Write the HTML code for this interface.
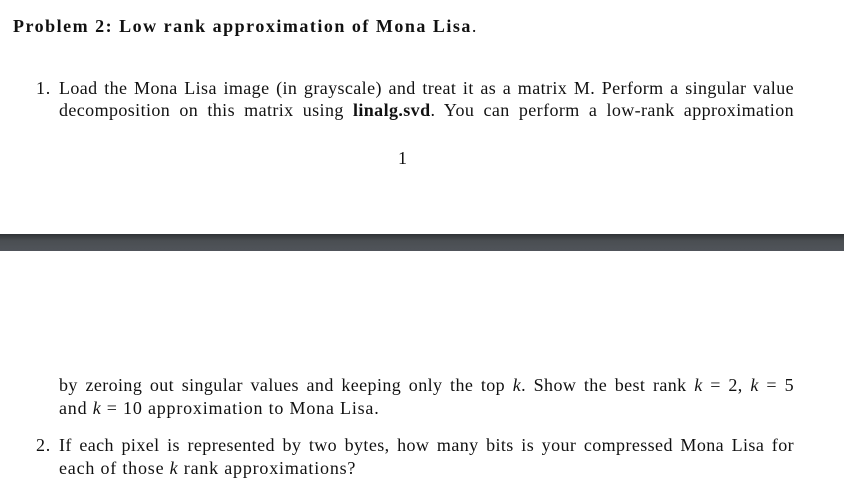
<!DOCTYPE html>
<html><head><meta charset="utf-8"><style>
body{margin:0;width:844px;height:495px;background:#fff;position:relative;overflow:hidden;font-family:"Liberation Serif",serif;color:#111;font-size:18px;letter-spacing:0.8px}
.l{position:absolute;white-space:nowrap;line-height:20px}
.j{width:735px;text-align:justify;text-align-last:justify;letter-spacing:0.4px}
b{font-weight:bold}
.bar{position:absolute;left:0;top:234px;width:844px;height:17px;background:linear-gradient(#2f3236,#4a4e52 40%,#50545a)}
</style></head><body>
<div class="l" style="left:13px;top:16px;font-size:18px;letter-spacing:1.5px"><b>Problem 2: Low rank approximation of Mona Lisa</b>.</div>
<div class="l" style="left:36px;top:78px">1.</div>
<div class="l j" style="left:59px;top:78px">Load the Mona Lisa image (in grayscale) and treat it as a matrix M. Perform a singular value</div>
<div class="l j" style="left:59px;top:100px">decomposition on this matrix using <b>linalg.svd</b>. You can perform a low-rank approximation</div>
<div class="l" style="left:398px;top:148px">1</div>
<div class="bar"></div>
<div class="l j" style="left:59px;top:375px">by zeroing out singular values and keeping only the top <i>k</i>. Show the best rank <i>k</i> = 2, <i>k</i> = 5</div>
<div class="l" style="left:59px;top:398px">and <i>k</i> = 10 approximation to Mona Lisa.</div>
<div class="l" style="left:36px;top:435px">2.</div>
<div class="l j" style="left:59px;top:435px">If each pixel is represented by two bytes, how many bits is your compressed Mona Lisa for</div>
<div class="l" style="left:59px;top:458px">each of those <i>k</i> rank approximations?</div>
</body></html>
